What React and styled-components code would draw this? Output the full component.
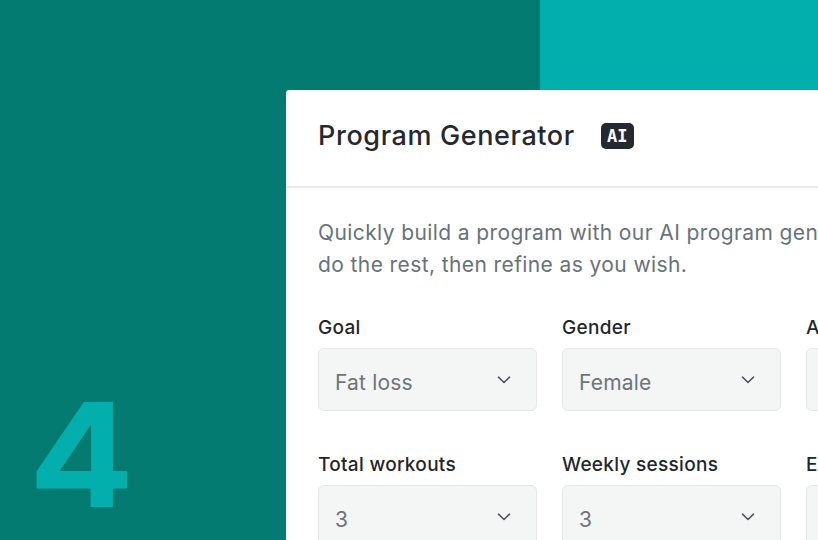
import React from "react";
import styled, { createGlobalStyle } from "styled-components";

const Global = createGlobalStyle`
  html, body { margin: 0; padding: 0; }
  body { font-family: Inter, "Noto Sans", sans-serif; background: #037b70; }
`;

const Stage = styled.div`
  width: 818px;
  height: 540px;
  overflow: hidden;
  background: #037b70;
  display: grid;
  grid-template-columns: 286px 254px 1fr;
  grid-template-rows: 90px 1fr;
`;

const Accent = styled.div`
  grid-column: 3;
  grid-row: 1;
  background: #03afac;
`;

const StepNumber = styled.div`
  grid-column: 1;
  grid-row: 2;
  align-self: end;
  padding: 0 0 13px 27px;
  font-family: Inter, sans-serif;
  font-weight: 700;
  font-size: 145px;
  line-height: 1;
  color: #03afac;
  transform: scaleX(1.07);
  transform-origin: left bottom;
`;

const Card = styled.section`
  grid-column: 2 / 4;
  grid-row: 2;
  width: 640px;
  background: #ffffff;
  border-top-left-radius: 3px;
  overflow: hidden;
`;

const Header = styled.header`
  height: 98px;
  box-sizing: border-box;
  display: flex;
  align-items: center;
  gap: 26px;
  padding: 0 32px 6px;
  border-bottom: 2px solid #e9ebeb;
`;

const Title = styled.h1`
  margin: 0;
  font-size: 27px;
  font-weight: 500;
  color: #23292e;
  letter-spacing: 0.6px;
`;

const Badge = styled.span`
  display: inline-flex;
  align-items: center;
  justify-content: center;
  width: 33px;
  height: 26px;
  margin-top: 2px;
  border-radius: 5px;
  background: #23292e;
  color: #ffffff;
  font-family: "DejaVu Sans Mono", monospace;
  font-weight: 700;
  font-size: 17px;
`;

const Body = styled.div`
  padding: 29px 32px 0;
`;

const Intro = styled.p`
  margin: 0 0 35px;
  font-size: 21px;
  line-height: 32px;
  letter-spacing: 0.4px;
  color: #67737a;
  white-space: nowrap;
`;

const Fields = styled.div`
  display: grid;
  grid-template-columns: repeat(3, 219px);
  column-gap: 25px;
  row-gap: 42px;
`;

const Field = styled.label`
  display: flex;
  flex-direction: column;
  gap: 9px;
`;

const Label = styled.span`
  font-size: 19px;
  font-weight: 500;
  color: #1f272c;
  line-height: 23px;
  letter-spacing: 0.3px;
  white-space: nowrap;
`;

const Select = styled.div`
  height: 63px;
  box-sizing: border-box;
  display: flex;
  align-items: center;
  justify-content: space-between;
  padding: 5px 25px 0 16px;
  background: #f4f5f5;
  border: 1px solid #e6e8e8;
  border-radius: 6px;
  font-size: 21px;
  letter-spacing: 0.2px;
  color: #6b757b;
`;

const Chevron = () => (
  <svg width="14" height="8" viewBox="0 0 14 8" fill="none" style={{ marginTop: -5 }}>
    <path d="M1.5 1.2 L7 6.5 L12.5 1.2" stroke="#4f585e" strokeWidth="1.6" strokeLinecap="round" strokeLinejoin="round" />
  </svg>
);

const fields = [
  { label: "Goal", value: "Fat loss" },
  { label: "Gender", value: "Female" },
  { label: "Age", value: "25-34" },
  { label: "Total workouts", value: "3" },
  { label: "Weekly sessions", value: "3" },
  { label: "Equipment", value: "Full gym" },
];

export default function App() {
  return (
    <>
      <Global />
      <Stage>
        <Accent />
        <StepNumber>4</StepNumber>
        <Card>
          <Header>
            <Title>Program Generator</Title>
            <Badge>AI</Badge>
          </Header>
          <Body>
            <Intro>
              Quickly build a program with our AI program generator. Pick a few options, let AI
              <br />
              do the rest, then refine as you wish.
            </Intro>
            <Fields>
              {fields.map((f) => (
                <Field key={f.label}>
                  <Label>{f.label}</Label>
                  <Select>
                    <span>{f.value}</span>
                    <Chevron />
                  </Select>
                </Field>
              ))}
            </Fields>
          </Body>
        </Card>
      </Stage>
    </>
  );
}
